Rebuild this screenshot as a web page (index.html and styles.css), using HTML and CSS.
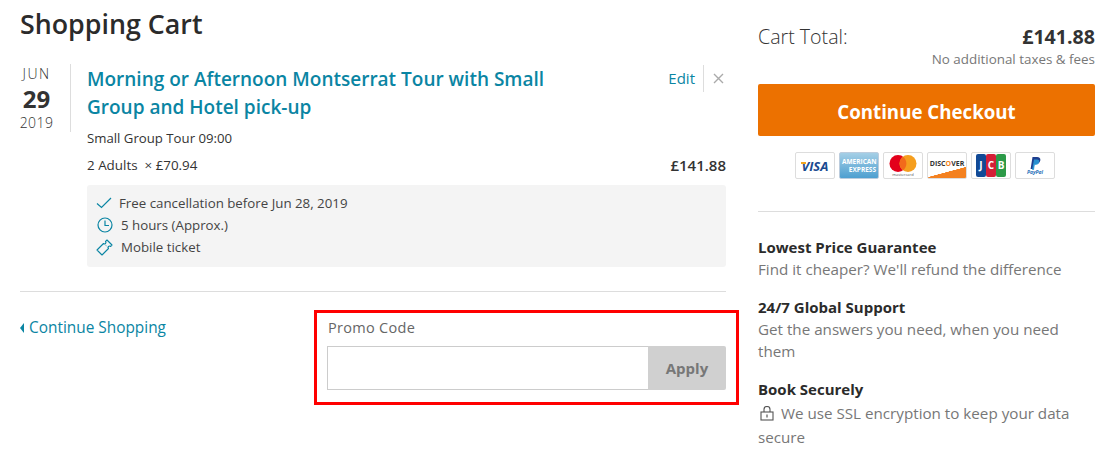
FILE: index.html
```html
<!DOCTYPE html>
<html lang="en">
<head>
    <meta charset="UTF-8">
    <title>Shopping Cart</title>
    <link rel="stylesheet" href="styles.css">
</head>
<body>
    <div class="page">
        <main class="cart">
            <h1>Shopping Cart</h1>
            <div class="item">
                <div class="date">
                    <span class="month">JUN</span>
                    <span class="day">29</span>
                    <span class="year">2019</span>
                </div>
                <div class="details">
                    <div class="item-head">
                        <a href="#" class="item-title">Morning or Afternoon Montserrat Tour with Small Group and Hotel pick-up</a>
                        <div class="item-actions">
                            <a href="#" class="edit">Edit</a>
                            <svg class="remove" width="11" height="11" viewBox="0 0 11 11"><path d="M1 1l9 9M10 1l-9 9" stroke="#aaa" stroke-width="1.4" fill="none"/></svg>
                        </div>
                    </div>
                    <p class="tour-type">Small Group Tour 09:00</p>
                    <div class="price-row">
                        <span>2 Adults &nbsp;&times; £70.94</span>
                        <span class="line-total">£141.88</span>
                    </div>
                    <ul class="perks">
                        <li>
                            <svg class="perk-check" width="16" height="12" viewBox="0 0 16 12"><path d="M1 6.5l4.5 4L15 1" stroke="#0a85a3" stroke-width="1.2" fill="none"/></svg>
                            Free cancellation before Jun 28, 2019
                        </li>
                        <li>
                            <svg class="perk-clock" width="16" height="16" viewBox="0 0 16 16"><circle cx="8" cy="8" r="7" stroke="#0a85a3" stroke-width="1.2" fill="none"/><path d="M8 3.5V8.5H12" stroke="#0a85a3" stroke-width="1.2" fill="none"/></svg>
                            5 hours (Approx.)
                        </li>
                        <li>
                            <svg class="perk-ticket" width="17" height="17" viewBox="0 0 17 17"><path d="M11 1l5 5-1.5 1.5a1.4 1.4 0 0 0-2 2L6 16 1 11 7.5 4.5a1.4 1.4 0 0 0 2-2z" stroke="#0a85a3" stroke-width="1.1" fill="none" stroke-linejoin="round"/><path d="M9.5 6l.7.7M11.2 7.7l.7.7" stroke="#0a85a3" stroke-width=".8"/></svg>
                            Mobile ticket
                        </li>
                    </ul>
                </div>
            </div>
            <div class="cart-foot">
                <a href="#" class="back-link"><span class="back-arrow"></span>Continue Shopping</a>
                <form class="promo">
                    <label class="promo-label" for="promo">Promo Code</label>
                    <div class="promo-row">
                        <input id="promo" class="promo-input" type="text">
                        <button class="promo-apply" type="button">Apply</button>
                    </div>
                </form>
            </div>
        </main>
        <aside class="summary">
            <div class="total-row">
                <span class="total-label">Cart Total:</span>
                <span class="total-value">£141.88</span>
            </div>
            <p class="no-fees">No additional taxes &amp; fees</p>
            <button class="checkout" type="button">Continue Checkout</button>
            <div class="pay-cards">
                <span class="pay-card"><span class="visa">VISA</span></span>
                <span class="pay-card amex"><span class="amex-top">AMERICAN</span><span class="amex-bottom">EXPRESS</span></span>
                <span class="pay-card mc">
                    <svg width="28" height="17" viewBox="0 0 28 17"><circle cx="9" cy="8.5" r="8.5" fill="#e3001b"/><circle cx="19" cy="8.5" r="8.5" fill="#f59e1e"/><path d="M14 1.7a8.5 8.5 0 0 1 0 13.6a8.5 8.5 0 0 1 0-13.6z" fill="#f26a1b"/></svg>
                    <small>mastercard</small>
                </span>
                <span class="pay-card discover"><span>DISC<i>O</i>VER</span></span>
                <span class="pay-card jcb"><b class="j">J</b><b class="c">C</b><b class="g">B</b></span>
                <span class="pay-card paypal">
                    <svg width="11" height="13" viewBox="0 0 11 13"><path d="M2.5 0H7c2.5 0 3.8 1.3 3.3 3.5C9.8 6 8 7 6 7H4.5L3.6 12H.6z" fill="#1f3f8f"/><path d="M4 2.5h3c1.5 0 2.5.8 2.2 2.3C8.8 7 7.3 8 5.5 8H4.7L4 13H2z" fill="#2a9fdc" opacity=".85"/></svg>
                    <small>PayPal</small>
                </span>
            </div>
            <hr class="summary-rule">
            <div class="promise">
                <h3>Lowest Price Guarantee</h3>
                <p>Find it cheaper? We'll refund the difference</p>
            </div>
            <div class="promise">
                <h3>24/7 Global Support</h3>
                <p>Get the answers you need, when you need them</p>
            </div>
            <div class="promise secure">
                <h3>Book Securely</h3>
                <p><svg class="lock" width="14" height="15" viewBox="0 0 14 15"><rect x="1" y="6" width="12" height="8" fill="none" stroke="#555" stroke-width="1.1"/><path d="M4 6V3.5a3 3 0 0 1 6 0V6" fill="none" stroke="#555" stroke-width="1.1"/><path d="M7 8.5v3" stroke="#555" stroke-width="1.2"/></svg> We use SSL encryption to keep your data secure</p>
            </div>
        </aside>
    </div>
</body>
</html>
```

FILE: styles.css
```css
* {
    margin: 0;
    padding: 0;
    box-sizing: border-box;
}

body {
    font-family: 'Open Sans', 'Liberation Sans', sans-serif;
    color: #333;
    background-color: #fff;
    font-size: 14px;
    overflow: hidden;
}

a {
    color: #0a85a3;
    text-decoration: none;
}

.page {
    display: flex;
    gap: 32px;
    padding: 0 20px;
}

.cart {
    width: 706px;
    flex-shrink: 0;
}

h1 {
    font-size: 26.8px;
    font-weight: 600;
    line-height: 34px;
    color: #2b2b2b;
    padding-top: 7px;
    margin-bottom: 23px;
}

/* item */
.item {
    display: flex;
    padding-bottom: 24px;
    border-bottom: 1px solid #ddd;
}

.date {
    width: 33px;
    height: 68px;
    border-right: 1px solid #ddd;
    padding-right: 17px;
    margin-right: 16px;
    flex-shrink: 0;
    display: flex;
    flex-direction: column;
    align-items: center;
    box-sizing: content-box;
}

.month {
    font-size: 14px;
    font-weight: 300;
    letter-spacing: 1.4px;
    line-height: 18px;
    margin-top: 1px;
}

.day {
    font-size: 24px;
    font-weight: 700;
    line-height: 31px;
}

.year {
    font-size: 14px;
    font-weight: 300;
    letter-spacing: .4px;
    line-height: 18px;
}

.details {
    flex: 1;
}

.item-head {
    display: flex;
    justify-content: space-between;
}

.item-title {
    width: 480px;
    font-size: 19px;
    font-weight: 600;
    line-height: 28px;
    margin-top: 1px;
}

.item-actions {
    display: flex;
    align-items: center;
    height: 27px;
    margin-top: 1px;
    padding-right: 2px;
}

.edit {
    font-size: 15px;
    padding-right: 8px;
    border-right: 1px solid #ddd;
    line-height: 27px;
    margin-right: 9px;
}

.tour-type {
    font-size: 13.2px;
    line-height: 18px;
    margin-top: 8px;
}

.price-row {
    display: flex;
    justify-content: space-between;
    font-size: 13.4px;
    line-height: 18px;
    margin-top: 9px;
}

.line-total {
    font-size: 15px;
    font-weight: 600;
}

.perks {
    list-style: none;
    background-color: #f4f4f4;
    border-radius: 3px;
    margin-top: 11px;
    padding: 7px 9px 9px;
    font-size: 13.3px;
    color: #444;
}

.perks li {
    display: flex;
    align-items: center;
    gap: 8px;
    height: 22px;
}

.perk-check {
    margin-right: -1px;
}

.perk-clock {
    margin-left: 1px;
}

/* bottom row */
.cart-foot {
    display: flex;
    justify-content: space-between;
    margin-right: -13px;
    padding-top: 18px;
}

.back-link {
    font-size: 15.4px;
    line-height: 20px;
    margin-top: 8px;
}

.back-arrow {
    display: inline-block;
    border-style: solid;
    border-width: 5px 4px 5px 0;
    border-color: transparent #0a85a3 transparent transparent;
    margin-right: 5px;
}

.promo {
    width: 425px;
    height: 95px;
    border: 3px solid #f00;
    padding: 5px 10px 0 10px;
}

.promo-label {
    display: block;
    font-size: 14.5px;
    line-height: 20px;
    color: #666;
    letter-spacing: .3px;
    padding-left: 1px;
}

.promo-row {
    display: flex;
    height: 44px;
    margin-top: 8px;
}

.promo-input {
    flex: 1;
    border: 1px solid #ccc;
    border-right: 0;
    min-width: 0;
}

.promo-apply {
    width: 78px;
    border: 0;
    border-radius: 0 2px 2px 0;
    background-color: #d0d0d0;
    color: #777;
    font-family: inherit;
    font-size: 15px;
    font-weight: 700;
}

/* right column */
.summary {
    width: 337px;
    flex-shrink: 0;
    padding-top: 25px;
}

.total-row {
    display: flex;
    justify-content: space-between;
    align-items: center;
    line-height: 24px;
}

.total-label {
    font-size: 19.6px;
    font-weight: 300;
}

.total-value {
    font-size: 19.6px;
    font-weight: 700;
}

.no-fees {
    text-align: right;
    font-size: 13.4px;
    line-height: 18px;
    color: #777;
    margin-top: 1px;
}

.checkout {
    display: block;
    width: 100%;
    height: 52px;
    margin-top: 16px;
    padding-top: 2px;
    border: 0;
    border-radius: 2px;
    background-color: #ec7100;
    color: #fff;
    font-family: inherit;
    font-size: 18.7px;
    font-weight: 700;
}

.pay-cards {
    display: flex;
    justify-content: center;
    gap: 4px;
    margin-top: 16px;
    margin-left: -3px;
}

.pay-card {
    width: 40px;
    height: 27px;
    border: 1px solid #ddd;
    border-radius: 2px;
    background-color: #fff;
    display: flex;
    flex-direction: column;
    align-items: center;
    justify-content: center;
    overflow: hidden;
}

.pay-card small {
    font-size: 4px;
    line-height: 5px;
    color: #555;
}

.visa {
    position: relative;
    font-size: 13px;
    font-weight: 700;
    font-style: italic;
    color: #1a4a8f;
}

.visa::before {
    content: "";
    position: absolute;
    left: -1px;
    top: 5px;
    width: 5px;
    height: 2px;
    background-color: #f2a51f;
}

.amex {
    background: linear-gradient(#a5cfe6, #4d9fd0);
    border-color: #bcd;
    color: #fff;
    font-size: 6.5px;
    font-weight: 700;
    line-height: 8px;
    align-items: stretch;
    padding: 0 2px;
}

.amex-bottom {
    align-self: flex-end;
}

.discover {
    font-size: 7px;
    font-weight: 700;
    color: #333;
    background: linear-gradient(165deg, #fff 68%, #f48120 69%);
    padding-bottom: 5px;
}

.discover i {
    font-style: normal;
    color: #f48120;
}

.jcb {
    flex-direction: row;
    padding: 1px 4px;
}

.jcb b {
    flex: 1;
    height: 100%;
    color: #fff;
    font-size: 10px;
    line-height: 23px;
    text-align: center;
    border-radius: 2px;
}

.j { background-color: #124a96; }
.c { background-color: #d41f37; }
.g { background-color: #2c9a48; }

.paypal small {
    color: #1f6fb8;
    font-weight: 700;
    font-style: italic;
    font-size: 5px;
}

.summary-rule {
    border: 0;
    border-top: 1px solid #ddd;
    margin-top: 32px;
}

.promise {
    margin-top: 16px;
}

.summary-rule + .promise {
    margin-top: 24px;
}

.promise h3 {
    font-size: 15px;
    font-weight: 700;
    line-height: 22px;
    color: #2b2b2b;
}

.promise p {
    font-size: 15.2px;
    line-height: 22px;
    color: #777;
}

.secure p {
    line-height: 24px;
    margin-top: 1px;
}

.lock {
    vertical-align: -2px;
    margin-left: 2px;
    margin-right: 3px;
}
```
